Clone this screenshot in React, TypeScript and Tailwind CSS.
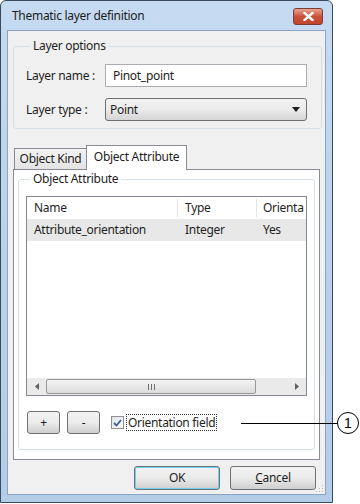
const font = { fontFamily: '"Noto Sans", "Open Sans", sans-serif' };

function GroupBox({ title, className, children }: { title: string; className: string; children: React.ReactNode }) {
  return (
    <fieldset className={`rounded-[3px] border border-[#d5dfe5] ${className}`}>
      <legend className="ml-[4px] px-[3px] text-[12px] leading-[16px] text-[#1e1e1e]">{title}</legend>
      {children}
    </fieldset>
  );
}

function Btn({ label, className }: { label: React.ReactNode; className: string }) {
  return (
    <div
      className={`flex items-center justify-center rounded-[3px] border border-[#707070] bg-gradient-to-b from-[#f2f2f2] via-[#ebebeb] to-[#cfcfcf] text-[12px] text-[#1e1e1e] ${className}`}
    >
      {label}
    </div>
  );
}

export default function App() {
  return (
    <div className="relative h-[504px] w-[360px] overflow-hidden bg-white tracking-[-0.3px]" style={font}>
      {/* dialog window */}
      <div className="flex h-[503px] w-[333px] flex-col rounded-t-[6px] border border-[#3a4a5c] bg-gradient-to-b from-[#c6dbf2] via-[#b9d1ec] to-[#b3cde9]">
        {/* title bar */}
        <div className="flex h-[29px] shrink-0 items-center justify-between pl-[11px] pr-[9px]">
          <span className="text-[12px] text-[#1b1b1b]">Thematic layer definition</span>
          <div className="mt-[2px] flex h-[17px] w-[30px] items-center justify-center rounded-[3px] border border-[#7e3b32] bg-gradient-to-b from-[#e8a493] via-[#c9513a] to-[#c2452f]">
            <svg width="11" height="9" viewBox="0 0 11 9">
              <path d="M1.5 1 L9.5 8 M9.5 1 L1.5 8" stroke="#fff" strokeWidth="2.4" strokeLinecap="square" />
            </svg>
          </div>
        </div>

        {/* client area */}
        <div className="relative mx-[6px] flex flex-1 flex-col border border-[#8aa5c4] bg-[#f0f0f0]">
          <GroupBox title="Layer options" className="ml-[5px] mr-[3px] mt-[7px] h-[91px] pb-[6px] pl-[12px] pr-[14px]">
            <div className="mt-[10px] flex items-center">
              <span className="w-[79px] text-[12px] text-[#1e1e1e]">Layer name :</span>
              <div className="flex h-[23px] flex-1 items-center border border-[#abadb3] bg-white pl-[7px] text-[12px] text-[#1e1e1e]">
                Pinot_point
              </div>
            </div>
            <div className="mt-[11px] flex items-center">
              <span className="w-[79px] text-[12px] text-[#1e1e1e]">Layer type :</span>
              <div className="flex h-[23px] flex-1 items-center justify-between rounded-[3px] border border-[#707070] bg-gradient-to-b from-[#f2f2f2] via-[#ebebeb] to-[#d5d5d5] pl-[4px] pr-[6px] text-[12px] text-[#1e1e1e]">
                <span>Point</span>
                <svg width="8" height="5" viewBox="0 0 8 5">
                  <path d="M0 0 H8 L4 5 Z" fill="#1e1e1e" />
                </svg>
              </div>
            </div>
          </GroupBox>

          {/* tabs */}
          <div className="ml-[5px] mr-[5px] mt-[16px] flex flex-col">
            <div className="flex items-end pl-[1px]">
              <div className="-mr-[1px] flex h-[21px] w-[73px] items-center justify-center border border-b-0 border-[#898c95] bg-gradient-to-b from-[#f3f3f3] to-[#e3e3e3] text-[12px] text-[#1e1e1e]">
                Object Kind
              </div>
              <div className="relative z-10 -mb-px flex h-[25px] w-[101px] items-center justify-center border border-b-0 border-[#898c95] bg-white pb-[2px] text-[12px] text-[#1e1e1e]">
                Object Attribute
              </div>
            </div>
            <div className="h-[291px] border border-[#898c95] bg-white px-[4px] pt-[1px]">
              <GroupBox title="Object Attribute" className="h-[279px] px-[7px]">
                {/* list view */}
                <div className="mt-[9px] flex h-[200px] flex-col border border-[#828790] bg-white">
                  <div className="flex h-[22px] shrink-0 items-center text-[12px] text-[#1e1e1e]">
                    <span className="w-[151px] border-r border-[#e5e5e5] pl-[7px]">Name</span>
                    <span className="w-[79px] border-r border-[#e5e5e5] pl-[7px]">Type</span>
                    <span className="flex-1 overflow-hidden whitespace-nowrap pl-[6px]">Orienta</span>
                  </div>
                  <div className="flex h-[22px] shrink-0 items-center bg-[#e8e8e8] text-[12px] text-[#1e1e1e]">
                    <span className="w-[151px] pl-[7px]">Attribute_orientation</span>
                    <span className="w-[79px] pl-[7px]">Integer</span>
                    <span className="flex-1 pl-[6px]">Yes</span>
                  </div>
                  <div className="flex-1" />
                  {/* horizontal scrollbar */}
                  <div className="flex h-[17px] shrink-0 items-center bg-[#eaeaea]">
                    <div className="flex w-[19px] justify-center">
                      <svg width="4" height="7" viewBox="0 0 4 7">
                        <path d="M4 0 V7 L0 3.5 Z" fill="#606060" />
                      </svg>
                    </div>
                    <div className="flex h-[15px] w-[210px] items-center justify-center rounded-[2px] border border-[#979797] bg-gradient-to-b from-[#f4f4f4] to-[#dcdcdc]">
                      <svg width="7" height="6" viewBox="0 0 7 6">
                        <path d="M0.5 0 V6 M3.5 0 V6 M6.5 0 V6" stroke="#707070" strokeWidth="1" />
                      </svg>
                    </div>
                    <div className="flex-1" />
                    <div className="flex w-[19px] justify-center">
                      <svg width="4" height="7" viewBox="0 0 4 7">
                        <path d="M0 0 V7 L4 3.5 Z" fill="#606060" />
                      </svg>
                    </div>
                  </div>
                </div>
                {/* add/remove + checkbox */}
                <div className="mt-[15px] flex items-center">
                  <Btn label="+" className="ml-[1px] h-[23px] w-[33px]" />
                  <Btn label="-" className="ml-[7px] h-[23px] w-[33px]" />
                  <div className="ml-[11px] flex h-[13px] w-[13px] items-center justify-center border border-[#8f8f8f] bg-gradient-to-br from-[#dfe4ea] to-white">
                    <svg width="9" height="8" viewBox="0 0 9 8">
                      <path d="M1 4 L3.5 6.5 L8 1" fill="none" stroke="#3c5a9a" strokeWidth="1.8" />
                    </svg>
                  </div>
                  <span className="ml-[2px] border border-dotted border-[#333] px-[1px] text-[12px] leading-[15px] text-[#1e1e1e]">
                    Orientation field
                  </span>
                </div>
              </GroupBox>
            </div>
          </div>

          {/* dialog buttons */}
          <div className="mt-[6px] flex justify-end gap-[10px] pr-[9px]">
            <Btn label="OK" className="h-[24px] w-[86px] border-[#3c7fb1] shadow-[inset_0_0_0_1px_#6ed0f5]" />
            <Btn label={<span><u>C</u>ancel</span>} className="h-[24px] w-[86px]" />
          </div>

          {/* resize grip */}
          <svg className="absolute bottom-[1px] right-[1px]" width="8" height="8" viewBox="0 0 8 8">
            <rect x="6" y="0" width="1" height="1" fill="#b9b9b9" />
            <rect x="3" y="3" width="1" height="1" fill="#b9b9b9" />
            <rect x="6" y="3" width="1" height="1" fill="#b9b9b9" />
            <rect x="0" y="6" width="1" height="1" fill="#b9b9b9" />
            <rect x="3" y="6" width="1" height="1" fill="#b9b9b9" />
            <rect x="6" y="6" width="1" height="1" fill="#b9b9b9" />
          </svg>
        </div>
        <div className="h-[7px] shrink-0" />
      </div>

      {/* callout */}
      <div className="absolute left-[241px] top-[423px] h-px w-[96px] bg-black" />
      <div className="absolute left-[337px] top-[412px] flex h-[22px] w-[22px] items-center justify-center rounded-full border border-black bg-white text-[14px] leading-none tracking-normal text-black" style={{ fontFamily: '"Liberation Sans", sans-serif' }}>
        1
      </div>
    </div>
  );
}
